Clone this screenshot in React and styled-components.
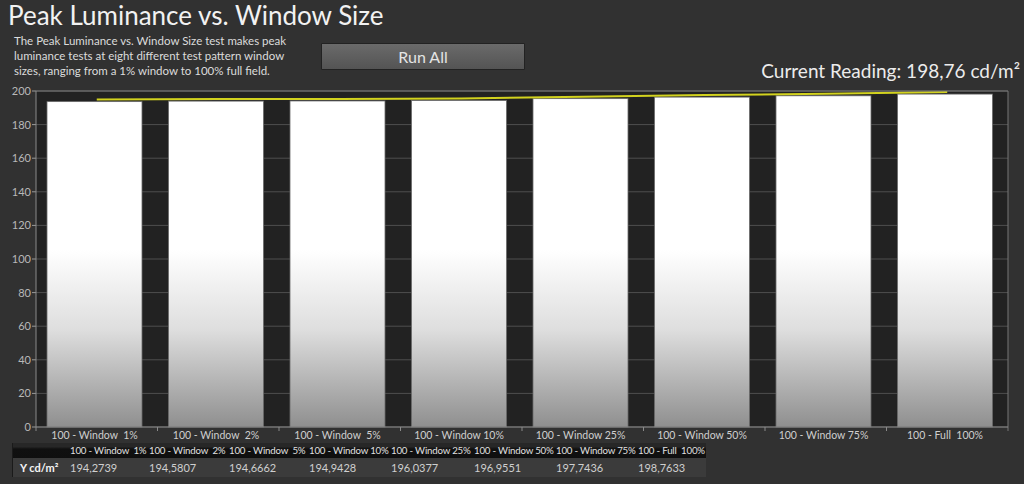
import React from "react";
import styled, { createGlobalStyle } from "styled-components";

const GlobalStyle = createGlobalStyle`
  html, body {
    margin: 0;
    background: #313131;
  }
  body {
    font-family: Lato, "Open Sans", sans-serif;
  }
`;

const Page = styled.div`
  width: 1024px;
  height: 484px;
  overflow: hidden;
  background: #313131;
  color: #e8e8e8;
`;

const Title = styled.h1`
  margin: 0;
  padding: 0 0 0 8px;
  height: 30px;
  font-size: 26px;
  font-weight: 400;
  line-height: 30px;
  color: #f2f2f2;
`;

const TopRow = styled.div`
  display: flex;
  align-items: flex-start;
  height: 55px;
  padding: 0 4px 0 14px;
`;

const Description = styled.p`
  margin: 3px 0 0;
  width: 290px;
  font-size: 11.5px;
  line-height: 15px;
  color: #dcdcdc;
`;

const RunButton = styled.button`
  margin: 13px 0 0 17px;
  width: 204px;
  height: 27px;
  border: 1px solid #222;
  border-radius: 1px;
  background: linear-gradient(#6a6a6a, #545454);
  color: #e4e4e4;
  font-family: inherit;
  font-size: 16px;
  cursor: pointer;
`;

const Reading = styled.div`
  margin: 0 0 3px auto;
  align-self: flex-end;
  font-size: 19px;
  line-height: 22px;
  color: #ececec;
`;

const ChartSvg = styled.svg`
  display: block;
  width: 1024px;
  height: 358px;
  font-family: Lato, "Open Sans", sans-serif;
`;

const Table = styled.div`
  display: grid;
  grid-template-columns: 57px 79px 80px 80px 82px 83px 82px 82px 68px;
  margin-left: 12px;
  width: 693px;
  border-left: 1px solid #1a1a1a;
  font-size: 11px;
`;

const HeadCell = styled.div`
  height: 15px;
  line-height: 15px;
  overflow: visible;
  background: linear-gradient(#272727 0, #272727 25%, #101010 40%, #0f0f0f 100%);
  color: #e0e0e0;
  font-size: 9.7px;
  letter-spacing: -0.2px;
  white-space: pre;
`;

const DataCell = styled.div`
  height: 19px;
  line-height: 19px;
  background: #3b3b3b;
  color: ${(p) => (p.$label ? "#f4f4f4" : "#cfcfcf")};
  font-weight: ${(p) => (p.$label ? 700 : 400)};
  padding-left: ${(p) => (p.$label ? "7px" : "0")};
  white-space: pre;
`;

const data = [
  { label: "100 - Window  1%", value: 194.2739 },
  { label: "100 - Window  2%", value: 194.5807 },
  { label: "100 - Window  5%", value: 194.6662 },
  { label: "100 - Window 10%", value: 194.9428 },
  { label: "100 - Window 25%", value: 196.0377 },
  { label: "100 - Window 50%", value: 196.9551 },
  { label: "100 - Window 75%", value: 197.7436 },
  { label: "100 - Full  100%", value: 198.7633 },
];

const fmt = (v) => v.toFixed(4).replace(".", ",");

const PLOT_L = 36;
const PLOT_R = 1008;
const PLOT_T = 6;
const PLOT_B = 342;
const SCALE = (PLOT_B - PLOT_T) / 200;
const CAT = (PLOT_R - PLOT_L) / data.length;
const BAR_W = 95;
const yOf = (v) => PLOT_B - v * SCALE;

const Chart = () => {
  const ticks = [0, 20, 40, 60, 80, 100, 120, 140, 160, 180, 200];
  const points = data
    .map((d, i) => `${PLOT_L + i * CAT + CAT / 2},${yOf(d.value) - 1}`)
    .join(" ");
  return (
    <ChartSvg viewBox="0 0 1024 358">
      <defs>
        <linearGradient id="barFill" gradientUnits="userSpaceOnUse" x1="0" y1="165" x2="0" y2={PLOT_B}>
          <stop offset="0" stopColor="#ffffff" />
          <stop offset="0.45" stopColor="#dedede" />
          <stop offset="1" stopColor="#8f8f8f" />
        </linearGradient>
      </defs>
      <rect x={PLOT_L} y={PLOT_T} width={PLOT_R - PLOT_L} height={PLOT_B - PLOT_T} fill="#222222" />
      {ticks.map((t) => (
        <g key={t}>
          <line x1={PLOT_L} x2={PLOT_R} y1={yOf(t)} y2={yOf(t)} stroke="#4f4f4f" strokeWidth="1" />
          <line x1={PLOT_L - 4} x2={PLOT_L} y1={yOf(t)} y2={yOf(t)} stroke="#9a9a9a" strokeWidth="1" />
          <text x={PLOT_L - 5} y={yOf(t) + 4} textAnchor="end" fontSize="11" fill="#b8b8b8">
            {t}
          </text>
        </g>
      ))}
      {data.map((d, i) => {
        const x = PLOT_L + i * CAT + 11;
        const y = yOf(d.value) + 1;
        return (
          <rect
            key={d.label}
            x={x}
            y={y}
            width={BAR_W}
            height={PLOT_B - y}
            fill="url(#barFill)"
            stroke="#6a6a6a"
            strokeWidth="0.8"
          />
        );
      })}
      <polyline points={points} fill="none" stroke="#d2d21e" strokeWidth="2" />
      <line x1={PLOT_L} x2={PLOT_R} y1={PLOT_T} y2={PLOT_T} stroke="#7a7a7a" strokeWidth="1.2" />
      <line x1={PLOT_L} x2={PLOT_L} y1={PLOT_T} y2={PLOT_B + 4} stroke="#8a8a8a" strokeWidth="1" />
      <line x1={PLOT_R} x2={PLOT_R} y1={PLOT_T} y2={PLOT_B + 4} stroke="#777" strokeWidth="1" />
      <line x1={PLOT_L} x2={PLOT_R} y1={PLOT_B} y2={PLOT_B} stroke="#8a8a8a" strokeWidth="1" />
      {data.map((d, i) => (
        <g key={d.label}>
          {i > 0 && (
            <line
              x1={PLOT_L + i * CAT}
              x2={PLOT_L + i * CAT}
              y1={PLOT_B}
              y2={PLOT_B + 4}
              stroke="#8a8a8a"
              strokeWidth="1"
            />
          )}
          <text
            x={PLOT_L + i * CAT + 11 + BAR_W / 2}
            y={PLOT_B + 12}
            textAnchor="middle"
            fontSize="10.5"
            fill="#cfcfcf"
            style={{ whiteSpace: "pre" }}
          >
            {d.label}
          </text>
        </g>
      ))}
    </ChartSvg>
  );
};

export default function App() {
  return (
    <Page>
      <GlobalStyle />
      <Title>Peak Luminance vs. Window Size</Title>
      <TopRow>
        <Description>
          The Peak Luminance vs. Window Size test makes peak luminance tests at
          eight different test pattern window sizes, ranging from a 1% window to
          100% full field.
        </Description>
        <RunButton>Run All</RunButton>
        <Reading>Current Reading: 198,76 cd/m²</Reading>
      </TopRow>
      <Chart />
      <Table>
        <HeadCell />
        {data.map((d) => (
          <HeadCell key={d.label}>{d.label}</HeadCell>
        ))}
        <DataCell $label>Y cd/m²</DataCell>
        {data.map((d) => (
          <DataCell key={d.label}>{fmt(d.value)}</DataCell>
        ))}
      </Table>
    </Page>
  );
}
